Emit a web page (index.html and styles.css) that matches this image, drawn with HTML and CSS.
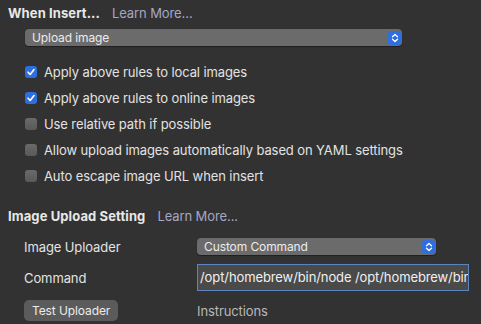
FILE: index.html
```html
<!DOCTYPE html>
<html lang="en">
<head>
    <meta charset="UTF-8">
    <meta name="viewport" content="width=device-width, initial-scale=1.0">
    <title>Image Settings</title>
    <link rel="stylesheet" href="styles.css">
</head>
<body>
    <div class="panel">
        <div class="section-title">
            <span class="title">When Insert...</span>
            <span class="learn">Learn More...</span>
        </div>

        <div class="select wide">
            <span>Upload image</span>
            <span class="stepper">
                <svg width="8" height="10" viewBox="0 0 8 10"><path d="M1.5 3.8 L4 1.5 L6.5 3.8 M1.5 6.2 L4 8.5 L6.5 6.2" fill="none" stroke="#fff" stroke-width="1.3" stroke-linecap="round" stroke-linejoin="round"/></svg>
            </span>
        </div>

        <div class="options">
            <div class="option"><span class="box checked"><svg width="10" height="10" viewBox="0 0 10 10"><path d="M2 5.2 L4.2 7.4 L8 2.6" fill="none" stroke="#fff" stroke-width="1.6" stroke-linecap="round" stroke-linejoin="round"/></svg></span>Apply above rules to local images</div>
            <div class="option"><span class="box checked"><svg width="10" height="10" viewBox="0 0 10 10"><path d="M2 5.2 L4.2 7.4 L8 2.6" fill="none" stroke="#fff" stroke-width="1.6" stroke-linecap="round" stroke-linejoin="round"/></svg></span>Apply above rules to online images</div>
            <div class="option"><span class="box"></span>Use relative path if possible</div>
            <div class="option"><span class="box"></span>Allow upload images automatically based on YAML settings</div>
            <div class="option"><span class="box"></span>Auto escape image URL when insert</div>
        </div>

        <div class="section-title second">
            <span class="title">Image Upload Setting</span>
            <span class="learn">Learn More...</span>
        </div>

        <div class="form">
            <div class="label">Image Uploader</div>
            <div class="select narrow">
                <span>Custom Command</span>
                <span class="stepper">
                    <svg width="8" height="10" viewBox="0 0 8 10"><path d="M1.5 3.8 L4 1.5 L6.5 3.8 M1.5 6.2 L4 8.5 L6.5 6.2" fill="none" stroke="#fff" stroke-width="1.3" stroke-linecap="round" stroke-linejoin="round"/></svg>
                </span>
            </div>

            <div class="label">Command</div>
            <div class="input">/opt/homebrew/bin/node /opt/homebrew/bin/picgo upload</div>

            <div><span class="button">Test Uploader</span></div>
            <div class="link">Instructions</div>
        </div>
    </div>
</body>
</html>
```

FILE: styles.css
```css
body {
    margin: 0;
    background-color: #323232;
    color: #e2e2e2;
    font-family: Inter, "Liberation Sans", sans-serif;
    font-size: 13px;
    letter-spacing: -0.1px;
    overflow: hidden;
}

.panel {
    padding: 4px 0 0 8px;
}

.section-title {
    display: flex;
    align-items: center;
    gap: 12px;
    height: 17px;
}

.section-title.second {
    margin-top: 18px;
}

.title {
    font-weight: 700;
    color: #e8e8e8;
    letter-spacing: 0.1px;
}

.learn {
    color: #a7a7c4;
}

.select {
    display: flex;
    align-items: center;
    justify-content: space-between;
    height: 17px;
    background-color: #6b6b6b;
    border-radius: 4px;
    padding: 0 1px 0 7px;
    font-size: 12px;
    color: #ececec;
    box-sizing: border-box;
    box-shadow: 0 0.5px 1px rgba(0, 0, 0, 0.4);
}

.select.wide {
    margin: 8px 0 0 17px;
    width: 377px;
}

.select.narrow {
    width: 239px;
}

.stepper {
    display: flex;
    align-items: center;
    justify-content: center;
    width: 13px;
    height: 14px;
    border-radius: 3px;
    background-color: #2f6ede;
}

.options {
    margin: 13px 0 0 17px;
    display: flex;
    flex-direction: column;
}

.option {
    display: flex;
    align-items: center;
    height: 26px;
    gap: 7px;
}

.box {
    display: flex;
    align-items: center;
    justify-content: center;
    width: 12px;
    height: 12px;
    border-radius: 3px;
    background: linear-gradient(#6a6a6a, #595959);
}

.box.checked {
    background: #2f6ede;
}

.form {
    margin: 14px 0 0 16px;
    display: grid;
    grid-template-columns: 173px 272px;
    row-gap: 9px;
    align-items: center;
}

.input {
    height: 27px;
    box-sizing: border-box;
    border: 1px solid #5b84c0;
    background-color: #4a4a4a;
    color: #f0f0f0;
    padding: 0 4px 0 2px;
    line-height: 25px;
    white-space: nowrap;
    overflow: hidden;
}

.button {
    display: inline-block;
    height: 21px;
    line-height: 21px;
    padding: 0 8px;
    background-color: #5b5b5b;
    border-radius: 5px;
    color: #ececec;
    font-size: 12px;
}

.link {
    color: #b8b8b8;
}
```
